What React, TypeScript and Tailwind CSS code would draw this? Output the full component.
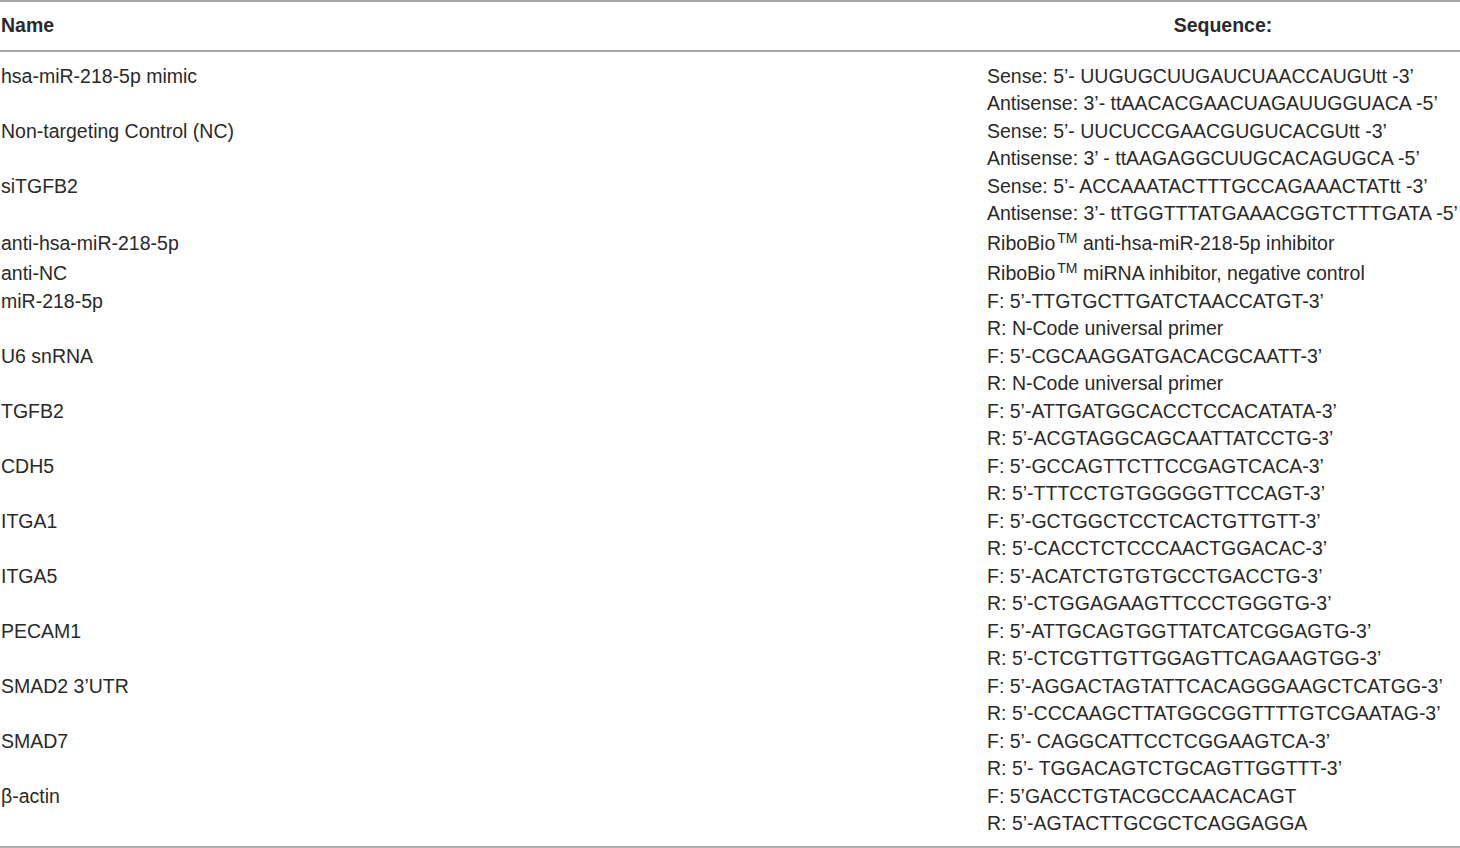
import React from "react";

type Row = { name: string; seq: React.ReactNode[]; tall?: boolean };

const TM = (rest: string) => (
  <>
    RiboBio<sup className="text-[14px] leading-none ml-[2px]">TM</sup> {rest}
  </>
);

const rows: Row[] = [
  { name: "hsa-miR-218-5p mimic", seq: ["Sense: 5’- UUGUGCUUGAUCUAACCAUGUtt -3’", "Antisense: 3’- ttAACACGAACUAGAUUGGUACA -5’"] },
  { name: "Non-targeting Control (NC)", seq: ["Sense: 5’- UUCUCCGAACGUGUCACGUtt -3’", "Antisense: 3’ - ttAAGAGGCUUGCACAGUGCA -5’"] },
  { name: "siTGFB2", seq: ["Sense: 5’- ACCAAATACTTTGCCAGAAACTATtt -3’", "Antisense: 3’- ttTGGTTTATGAAACGGTCTTTGATA -5’"] },
  { name: "anti-hsa-miR-218-5p", seq: [TM("anti-hsa-miR-218-5p inhibitor")], tall: true },
  { name: "anti-NC", seq: [TM("miRNA inhibitor, negative control")], tall: true },
  { name: "miR-218-5p", seq: ["F: 5’-TTGTGCTTGATCTAACCATGT-3’", "R: N-Code universal primer"] },
  { name: "U6 snRNA", seq: ["F: 5’-CGCAAGGATGACACGCAATT-3’", "R: N-Code universal primer"] },
  { name: "TGFB2", seq: ["F: 5’-ATTGATGGCACCTCCACATATA-3’", "R: 5’-ACGTAGGCAGCAATTATCCTG-3’"] },
  { name: "CDH5", seq: ["F: 5’-GCCAGTTCTTCCGAGTCACA-3’", "R: 5’-TTTCCTGTGGGGGTTCCAGT-3’"] },
  { name: "ITGA1", seq: ["F: 5’-GCTGGCTCCTCACTGTTGTT-3’", "R: 5’-CACCTCTCCCAACTGGACAC-3’"] },
  { name: "ITGA5", seq: ["F: 5’-ACATCTGTGTGCCTGACCTG-3’", "R: 5’-CTGGAGAAGTTCCCTGGGTG-3’"] },
  { name: "PECAM1", seq: ["F: 5’-ATTGCAGTGGTTATCATCGGAGTG-3’", "R: 5’-CTCGTTGTTGGAGTTCAGAAGTGG-3’"] },
  { name: "SMAD2 3’UTR", seq: ["F: 5’-AGGACTAGTATTCACAGGGAAGCTCATGG-3’", "R: 5’-CCCAAGCTTATGGCGGTTTTGTCGAATAG-3’"] },
  { name: "SMAD7", seq: ["F: 5’- CAGGCATTCCTCGGAAGTCA-3’", "R: 5’- TGGACAGTCTGCAGTTGGTTT-3’"] },
  { name: "β-actin", seq: ["F: 5’GACCTGTACGCCAACACAGT", "R: 5’-AGTACTTGCGCTCAGGAGGA"] },
];

export default function App() {
  return (
    <div
      className="w-[1460px] h-[848px] bg-white text-[#2a2a2a] text-[19.5px] overflow-hidden"
      style={{ fontFamily: '"Liberation Sans", Arial, Helvetica, sans-serif' }}
    >
      <div className="border-t-2 border-b-2 border-[#a8a8a8] h-[52px] grid grid-cols-[986px_1fr] items-center font-bold">
        <div className="pl-[1px]">Name</div>
        <div className="text-center">Sequence:</div>
      </div>
      <div className="pt-[11px] pb-[8px] border-b-2 border-[#b0b0b0]">
        {rows.map((r, i) => (
          <div key={i} className={`grid grid-cols-[986px_1fr] ${r.tall ? "" : "pb-[0.6px]"}`}>
            <div className={`pl-[1px] whitespace-nowrap ${r.tall ? "leading-[30px]" : "leading-[27.2px]"}`}>{r.name}</div>
            <div className="pl-[1px]">
              {r.seq.map((s, j) => (
                <div key={j} className={`whitespace-nowrap ${r.tall ? "h-[30px] leading-[30px]" : "h-[27.2px] leading-[27.2px]"}`}>
                  {s}
                </div>
              ))}
            </div>
          </div>
        ))}
      </div>
    </div>
  );
}
